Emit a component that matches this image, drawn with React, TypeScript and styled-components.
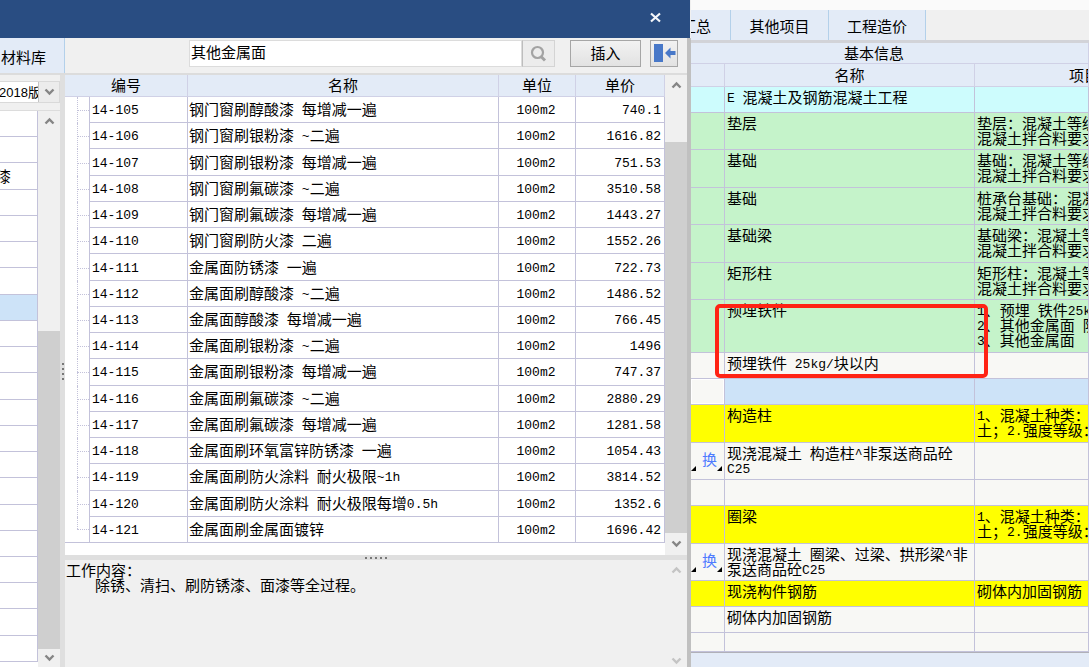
import React from 'react';
import styled, { createGlobalStyle, css } from 'styled-components';

const color = {
  navy: '#294d82',
  panel: '#f0f0f0',
  head: '#e3ebf7',
  headLine: '#d0d1e6',
  line: '#c3c2da',
  tabLine: '#b3d0ea',
  track: '#cfcfcf',
  splitter: '#dfdfdf',
  selected: '#cde3f8',
  plain: '#f8f8f5',
  green: '#c5f3ca',
  cyan: '#cdfcfd',
  yellow: '#ffff00',
};

const GlobalStyle = createGlobalStyle`
  *, *::before, *::after { box-sizing: border-box; }
  body {
    margin: 0;
    font-family: "Noto Sans CJK SC", sans-serif;
    font-size: 15px;
    line-height: 15px;
    color: #000;
    background: ${color.panel};
  }
  button, input, select { font: inherit; color: inherit; margin: 0; }
`;

const Screen = styled.div`
  display: flex;
  min-height: 100vh;
  overflow: hidden;
`;

/* ---------- text ---------- */

const Latin = styled.span`
  font-family: "Liberation Mono", monospace;
  font-size: 13px;
  line-height: 0;
  vertical-align: 1px;
  white-space: pre;
`;

const Mixed = ({ text }: { text: string }) => (
  <>
    {text.split(/([\x20-\x7e]+)/).map((part, i) =>
      i % 2 ? <Latin key={i}>{part}</Latin> : part,
    )}
  </>
);

/* ---------- scrollbar ---------- */

const Bar = styled.div`
  flex: none;
  width: 22px;
  display: flex;
  flex-direction: column;
  background: ${color.panel};
`;

const BarEnd = styled.span<{ $h: number }>`
  height: ${p => p.$h}px;
  display: flex;
  align-items: center;
  justify-content: center;
`;

const BarThumb = styled.span<{ $h: number }>`
  height: ${p => p.$h}px;
`;

const BarTrack = styled.span<{ $empty?: boolean }>`
  flex: 1;
  background: ${p => (p.$empty ? 'transparent' : color.track)};
`;

const Chevron = ({ up, faint }: { up?: boolean; faint?: boolean }) => (
  <svg width="11" height="8" viewBox="0 0 11 8" aria-hidden="true">
    <path
      d={up ? 'M1.5 6.5 L5.5 2.5 L9.5 6.5' : 'M1.5 1.5 L5.5 5.5 L9.5 1.5'}
      fill="none"
      stroke={faint ? '#c4c4c4' : '#858585'}
      strokeWidth="2.4"
    />
  </svg>
);

const Scrollbar = ({ thumb, end, empty }: { thumb: number; end: number; empty?: boolean }) => (
  <Bar>
    <BarEnd $h={20}><Chevron up faint={empty} /></BarEnd>
    <BarThumb $h={thumb} />
    <BarTrack $empty={empty} />
    <BarEnd $h={end}><Chevron faint={empty} /></BarEnd>
  </Bar>
);

/* ---------- dialog ---------- */

const Dialog = styled.section`
  flex: 691 1 0;
  min-width: 0;
  display: flex;
  flex-direction: column;
`;

const TitleBar = styled.header`
  height: 38px;
  flex: none;
  display: flex;
  align-items: center;
  justify-content: flex-end;
  padding: 0 27px 3px 0;
  margin-right: 1px;
  background: ${color.navy};
`;

const CloseButton = styled.button`
  width: 15px;
  height: 15px;
  padding: 0;
  border: 0;
  background: none;
  display: flex;
  align-items: center;
  justify-content: center;
`;

const DialogBody = styled.div`
  flex: 1;
  display: flex;
  flex-direction: column;
  border-right: 4px solid #c0c0c0;
  background: ${color.panel};
`;

const Toolbar = styled.div`
  height: 37px;
  flex: none;
  display: flex;
  align-items: flex-start;
  border-bottom: 2px solid #dcdcdc;
`;

const LibraryTab = styled.button`
  width: 65px;
  height: 35px;
  padding: 2px 0 0 1px;
  border: 0;
  border-right: 1px solid ${color.tabLine};
  background: ${color.head};
  text-align: left;
  white-space: nowrap;
`;

const SearchBox = styled.form`
  flex: 1;
  min-width: 0;
  display: flex;
  margin: 2px 15px 0 124px;
`;

const SearchInput = styled.input`
  flex: 1;
  min-width: 0;
  height: 27px;
  padding: 0 1px 4px;
  border: 1px solid #dcdcdc;
  background: #fff;
  outline: 0;
`;

const SearchButton = styled.button`
  width: 33px;
  height: 27px;
  padding: 0;
  border: 1px solid #d4d4d4;
  border-left-color: #bdbdbd;
  background: #ececec;
  display: flex;
  align-items: center;
  justify-content: center;
`;

const PushButton = styled.button<{ $w: number }>`
  width: ${p => p.$w}px;
  height: 27px;
  margin: 2px 9px 0 0;
  padding: 0 0 3px;
  border: 1px solid #a6a6a6;
  background: linear-gradient(#f2f2f2, #e2e2e2);
  display: flex;
  align-items: center;
  justify-content: center;
`;

const Panes = styled.div`
  flex: 1;
  display: flex;
`;

const SidePane = styled.aside`
  width: 60px;
  flex: none;
  display: flex;
  flex-direction: column;
`;

const EditionBox = styled.div`
  height: 22px;
  margin: 6px 0 7px;
  display: flex;
  border: 1px solid #d9d9d9;
  border-left: 0;
  background: #fff;
`;

const EditionSelect = styled.select`
  appearance: none;
  width: 38px;
  padding: 0;
  border: 0;
  background: none;
  font-family: "Liberation Sans", "Noto Sans CJK SC", sans-serif;
  font-size: 13px;
  text-indent: -1px;
  outline: 0;
`;

const EditionArrow = styled.span`
  flex: 1;
  display: flex;
  align-items: center;
  justify-content: center;
  border-left: 1px solid #c4c4c4;
  background: #ececec;
`;

const SideBody = styled.div`
  flex: 1;
  display: flex;
  border-top: 1px solid #dcdcdc;
`;

const SideList = styled.ul`
  flex: 1;
  list-style: none;
  margin: 0;
  padding: 0 0 5px;
  display: flex;
  flex-direction: column;
  background: #fff;
`;

const SideItem = styled.li<{ $selected: boolean }>`
  flex: 1 0 26px;
  padding-top: 5px;
  text-indent: -4px;
  border-right: 1px solid ${color.line};
  border-bottom: 1px solid ${color.line};
  background: ${p => (p.$selected ? color.selected : '#fff')};
`;

const Splitter = styled.div<{ $vertical?: boolean }>`
  flex: none;
  display: flex;
  align-items: center;
  justify-content: center;
  gap: 3px;
  background: ${color.splitter};
  ${p => (p.$vertical ? css`width: 5px; flex-direction: column;` : css`height: 5px;`)}
`;

const Dot = styled.i`
  width: 2px;
  height: 2px;
  background: #777;
`;

const MainPane = styled.div`
  flex: 1;
  min-width: 0;
  display: flex;
  flex-direction: column;
`;

const TableArea = styled.div`
  flex: 1;
  display: flex;
  align-items: stretch;
  background: #fff;
`;

const TableHolder = styled.div`
  flex: 1;
  min-width: 0;
`;

const NormTable = styled.table`
  width: 100%;
  height: 468px;
  table-layout: fixed;
  border-collapse: separate;
  border-spacing: 0;
  white-space: nowrap;
`;

const Col = styled.col<{ $w?: number }>`
  width: ${p => (p.$w ? `${p.$w}px` : 'auto')};
`;

const NormHead = styled.th`
  height: 22px;
  padding: 0 0 2px;
  font-weight: 400;
  background: ${color.head};
  border-right: 1px solid ${color.headLine};
  border-bottom: 1px solid ${color.headLine};
`;

const NormCell = styled.td<{ $align?: 'left' | 'center' | 'right' }>`
  padding: 0 3px 2px 1px;
  text-align: ${p => p.$align ?? 'left'};
  overflow: hidden;
  border-right: 1px solid ${color.line};
  border-bottom: 1px solid ${color.line};
`;

const CodeCell = styled(NormCell)`
  padding-left: 2px;
`;

const TreeCell = styled.td<{ $last: boolean }>`
  position: relative;
  padding: 0;
  border-right: 1px solid ${color.line};
  border-bottom: ${p => (p.$last ? `1px solid ${color.line}` : 0)};
  &::before {
    content: '';
    position: absolute;
    left: 12px;
    top: 0;
    bottom: ${p => (p.$last ? '50%' : 0)};
    border-left: 1px dotted ${color.line};
  }
  &::after {
    content: '';
    position: absolute;
    left: 12px;
    right: 0;
    top: 50%;
    border-top: 1px dotted ${color.line};
  }
`;

const WorkPanel = styled.div`
  height: 107px;
  flex: none;
  display: flex;
`;

const WorkText = styled.div`
  flex: 1;
  padding: 2px 1px;
`;

const WorkLine = styled.p<{ $indent?: boolean }>`
  margin: 0;
  padding-left: ${p => (p.$indent ? 29 : 0)}px;
`;

/* ---------- sheet behind the dialog ---------- */

const Sheet = styled.main`
  flex: 398 1 0;
  min-width: 0;
  position: relative;
  overflow: hidden;
  background: ${color.head};
`;

const SheetTabs = styled.nav`
  height: 43px;
  display: flex;
  border-top: 10px solid #fafafa;
  border-bottom: 3px solid #d2d3d8;
  background: ${color.panel};
`;

const SheetTab = styled.button<{ $w: number; $cut?: boolean }>`
  width: ${p => p.$w}px;
  flex: none;
  display: flex;
  align-items: center;
  justify-content: ${p => (p.$cut ? 'flex-end' : 'center')};
  padding: 0 ${p => (p.$cut ? 19 : 0)}px 0 0;
  border: 0;
  border-right: 1px solid ${color.tabLine};
  background: ${color.head};
  overflow: hidden;
  white-space: nowrap;
`;

const SheetTable = styled.table`
  width: 100%;
  table-layout: fixed;
  border-collapse: separate;
  border-spacing: 0;
  border-bottom: 1px solid #b0b0b8;
`;

const SheetHead = styled.th<{ $h: number; $left?: number }>`
  height: ${p => p.$h}px;
  padding: 0 0 2px ${p => p.$left ?? 0}px;
  font-weight: 400;
  text-align: ${p => (p.$left ? 'left' : 'center')};
  white-space: nowrap;
  overflow: hidden;
  background: ${color.head};
  border-right: 1px solid ${color.headLine};
  border-bottom: 1px solid ${color.headLine};
`;

const SheetRow = styled.tr<{ $h: number; $bg: string }>`
  height: ${p => p.$h}px;
  background: ${p => p.$bg};
`;

const SheetCell = styled.td<{ $nowrap?: boolean }>`
  padding: 2px 0 0 2px;
  vertical-align: top;
  overflow: hidden;
  white-space: ${p => (p.$nowrap ? 'pre' : 'pre-line')};
  border-right: 1px solid ${color.line};
  border-bottom: 1px solid ${color.line};
`;

const MarkCell = styled.td<{ $plain?: boolean }>`
  padding: 0;
  vertical-align: middle;
  border-right: 1px solid ${color.line};
  border-bottom: 1px solid ${color.line};
  ${p => p.$plain && css`
    background: ${color.plain};
    box-shadow: inset 0 0 0 1px #fff;
  `}
`;

const Mark = styled.div`
  display: flex;
  align-items: flex-end;
  color: #4f7cff;
`;

const MarkText = styled.span`
  padding: 0 0 5px 6px;
`;

const Corner = () => (
  <svg width="5" height="5" viewBox="0 0 5 5" aria-hidden="true">
    <path d="M5 0V5H0Z" fill="#000" />
  </svg>
);

const Highlight = styled.div`
  position: absolute;
  left: 24px;
  top: 304px;
  width: 273px;
  height: 74px;
  border: 4px solid #ff2314;
  border-radius: 5px;
  pointer-events: none;
`;

/* ---------- data ---------- */

const norms: [string, string, string][] = [
  ['14-105', '钢门窗刷醇酸漆 每增减一遍', '740.1'],
  ['14-106', '钢门窗刷银粉漆 ~二遍', '1616.82'],
  ['14-107', '钢门窗刷银粉漆 每增减一遍', '751.53'],
  ['14-108', '钢门窗刷氟碳漆 ~二遍', '3510.58'],
  ['14-109', '钢门窗刷氟碳漆 每增减一遍', '1443.27'],
  ['14-110', '钢门窗刷防火漆 二遍', '1552.26'],
  ['14-111', '金属面防锈漆 一遍', '722.73'],
  ['14-112', '金属面刷醇酸漆 ~二遍', '1486.52'],
  ['14-113', '金属面醇酸漆 每增减一遍', '766.45'],
  ['14-114', '金属面刷银粉漆 ~二遍', '1496'],
  ['14-115', '金属面刷银粉漆 每增减一遍', '747.37'],
  ['14-116', '金属面刷氟碳漆 ~二遍', '2880.29'],
  ['14-117', '金属面刷氟碳漆 每增减一遍', '1281.58'],
  ['14-118', '金属面刷环氧富锌防锈漆 一遍', '1054.43'],
  ['14-119', '金属面刷防火涂料 耐火极限~1h', '3814.52'],
  ['14-120', '金属面刷防火涂料 耐火极限每增0.5h', '1352.6'],
  ['14-121', '金属面刷金属面镀锌', '1696.42'],
];

type Item = { h: number; bg: string; name?: string; note?: string; mark?: boolean; current?: boolean };

const items: Item[] = [
  { h: 26, bg: color.cyan, name: 'E 混凝土及钢筋混凝土工程' },
  { h: 37, bg: color.green, name: '垫层', note: '垫层：混凝土等级\n混凝土拌合料要求' },
  { h: 38, bg: color.green, name: '基础', note: '基础：混凝土等级\n混凝土拌合料要求' },
  { h: 37, bg: color.green, name: '基础', note: '桩承台基础：混凝\n混凝土拌合料要求' },
  { h: 38, bg: color.green, name: '基础梁', note: '基础梁：混凝土等\n混凝土拌合料要求' },
  { h: 37, bg: color.green, name: '矩形柱', note: '矩形柱：混凝土等\n混凝土拌合料要求' },
  { h: 53, bg: color.green, name: '预埋铁件', note: '1、预埋 铁件25k\n2、其他金属面 防\n3、其他金属面' },
  { h: 26, bg: color.plain, name: '预埋铁件 25kg/块以内' },
  { h: 26, bg: color.selected, current: true },
  { h: 38, bg: color.yellow, name: '构造柱', note: '1、混凝土种类：\n土；2.强度等级：' },
  { h: 37, bg: color.plain, name: '现浇混凝土 构造柱^非泵送商品砼\nC25', mark: true },
  { h: 26, bg: color.plain },
  { h: 38, bg: color.yellow, name: '圈梁', note: '1、混凝土种类：\n土；2.强度等级：' },
  { h: 37, bg: color.plain, name: '现浇混凝土 圈梁、过梁、拱形梁^非\n泵送商品砼C25', mark: true },
  { h: 26, bg: color.yellow, name: '现浇构件钢筋', note: '砌体内加固钢筋' },
  { h: 26, bg: color.plain, name: '砌体内加固钢筋' },
  { h: 19, bg: color.plain },
];

const sideItems = Array.from({ length: 21 }, (_, i) => (i === 2 ? '漆' : ''));

/* ---------- page ---------- */

export default function App() {
  return (
    <Screen>
      <GlobalStyle />
      <Dialog>
        <TitleBar>
          <CloseButton type="button" aria-label="关闭">
            <svg width="11" height="11" viewBox="0 0 11 11" aria-hidden="true">
              <path d="M1 1.5 L10 9.5 M10 1.5 L1 9.5" stroke="#f4f6fa" strokeWidth="2.2" />
            </svg>
          </CloseButton>
        </TitleBar>
        <DialogBody>
          <Toolbar>
            <LibraryTab type="button">材料库</LibraryTab>
            <SearchBox onSubmit={e => e.preventDefault()}>
              <SearchInput aria-label="查询" defaultValue="其他金属面" />
              <SearchButton type="submit" aria-label="查找">
                <svg width="17" height="17" viewBox="0 0 17 17" aria-hidden="true">
                  <circle cx="7.5" cy="7.5" r="5.5" fill="none" stroke="#a3a3a3" strokeWidth="2.2" />
                  <path d="M11 11.5 L15 15.5" stroke="#a3a3a3" strokeWidth="3" />
                </svg>
              </SearchButton>
            </SearchBox>
            <PushButton type="button" $w={71}>插入</PushButton>
            <PushButton type="button" $w={28} aria-label="收起">
              <svg width="23" height="19" viewBox="0 0 23 19" aria-hidden="true">
                <rect x="1" y="1" width="9" height="18" fill="#4878c8" />
                <path d="M12 10 L17.5 4.5 V8 H22.5 V12 H17.5 V15.5 Z" fill="#4878c8" />
              </svg>
            </PushButton>
          </Toolbar>
          <Panes>
            <SidePane>
              <EditionBox>
                <EditionSelect aria-label="定额版本" defaultValue="2018版">
                  <option>2018版</option>
                </EditionSelect>
                <EditionArrow><Chevron /></EditionArrow>
              </EditionBox>
              <SideBody>
                <SideList>
                  {sideItems.map((text, i) => (
                    <SideItem key={i} $selected={i === 7}>{text}</SideItem>
                  ))}
                </SideList>
                <Scrollbar thumb={200} end={18} />
              </SideBody>
            </SidePane>
            <Splitter $vertical><Dot /><Dot /><Dot /><Dot /></Splitter>
            <MainPane>
              <TableArea>
                <TableHolder>
                  <NormTable>
                    <colgroup>
                      <Col $w={25} /><Col $w={98} /><Col /><Col $w={77} /><Col $w={89} />
                    </colgroup>
                    <thead>
                      <tr>
                        <NormHead colSpan={2}>编号</NormHead>
                        <NormHead>名称</NormHead>
                        <NormHead>单位</NormHead>
                        <NormHead>单价</NormHead>
                      </tr>
                    </thead>
                    <tbody>
                      {norms.map(([code, name, price], i) => (
                        <tr key={code}>
                          <TreeCell $last={i === norms.length - 1} />
                          <CodeCell><Latin>{code}</Latin></CodeCell>
                          <NormCell><Mixed text={name} /></NormCell>
                          <NormCell $align="center"><Latin>100m2</Latin></NormCell>
                          <NormCell $align="right"><Latin>{price}</Latin></NormCell>
                        </tr>
                      ))}
                    </tbody>
                  </NormTable>
                </TableHolder>
                <Scrollbar thumb={47} end={22} />
              </TableArea>
              <Splitter><Dot /><Dot /><Dot /><Dot /><Dot /></Splitter>
              <WorkPanel>
                <WorkText>
                  <WorkLine>工作内容：</WorkLine>
                  <WorkLine $indent>除锈、清扫、刷防锈漆、面漆等全过程。</WorkLine>
                </WorkText>
                <Scrollbar thumb={0} end={12} empty />
              </WorkPanel>
            </MainPane>
          </Panes>
        </DialogBody>
      </Dialog>
      <Sheet>
        <SheetTabs>
          <SheetTab type="button" $w={40} $cut>汇总</SheetTab>
          <SheetTab type="button" $w={98}>其他项目</SheetTab>
          <SheetTab type="button" $w={97}>工程造价</SheetTab>
        </SheetTabs>
        <SheetTable>
          <colgroup><Col $w={34} /><Col $w={250} /><Col /></colgroup>
          <thead>
            <tr><SheetHead colSpan={3} $h={21} $left={153}>基本信息</SheetHead></tr>
            <tr>
              <SheetHead $h={23} />
              <SheetHead $h={23}>名称</SheetHead>
              <SheetHead $h={23} $left={94}>项目</SheetHead>
            </tr>
          </thead>
          <tbody>
            {items.map((item, i) => (
              <SheetRow key={i} $h={item.h} $bg={item.bg}>
                <MarkCell $plain={item.current}>
                  {item.mark && <Mark><Corner /><MarkText>换</MarkText><Corner /></Mark>}
                </MarkCell>
                <SheetCell><Mixed text={item.name ?? ''} /></SheetCell>
                <SheetCell $nowrap><Mixed text={item.note ?? ''} /></SheetCell>
              </SheetRow>
            ))}
          </tbody>
        </SheetTable>
        <Highlight />
      </Sheet>
    </Screen>
  );
}
